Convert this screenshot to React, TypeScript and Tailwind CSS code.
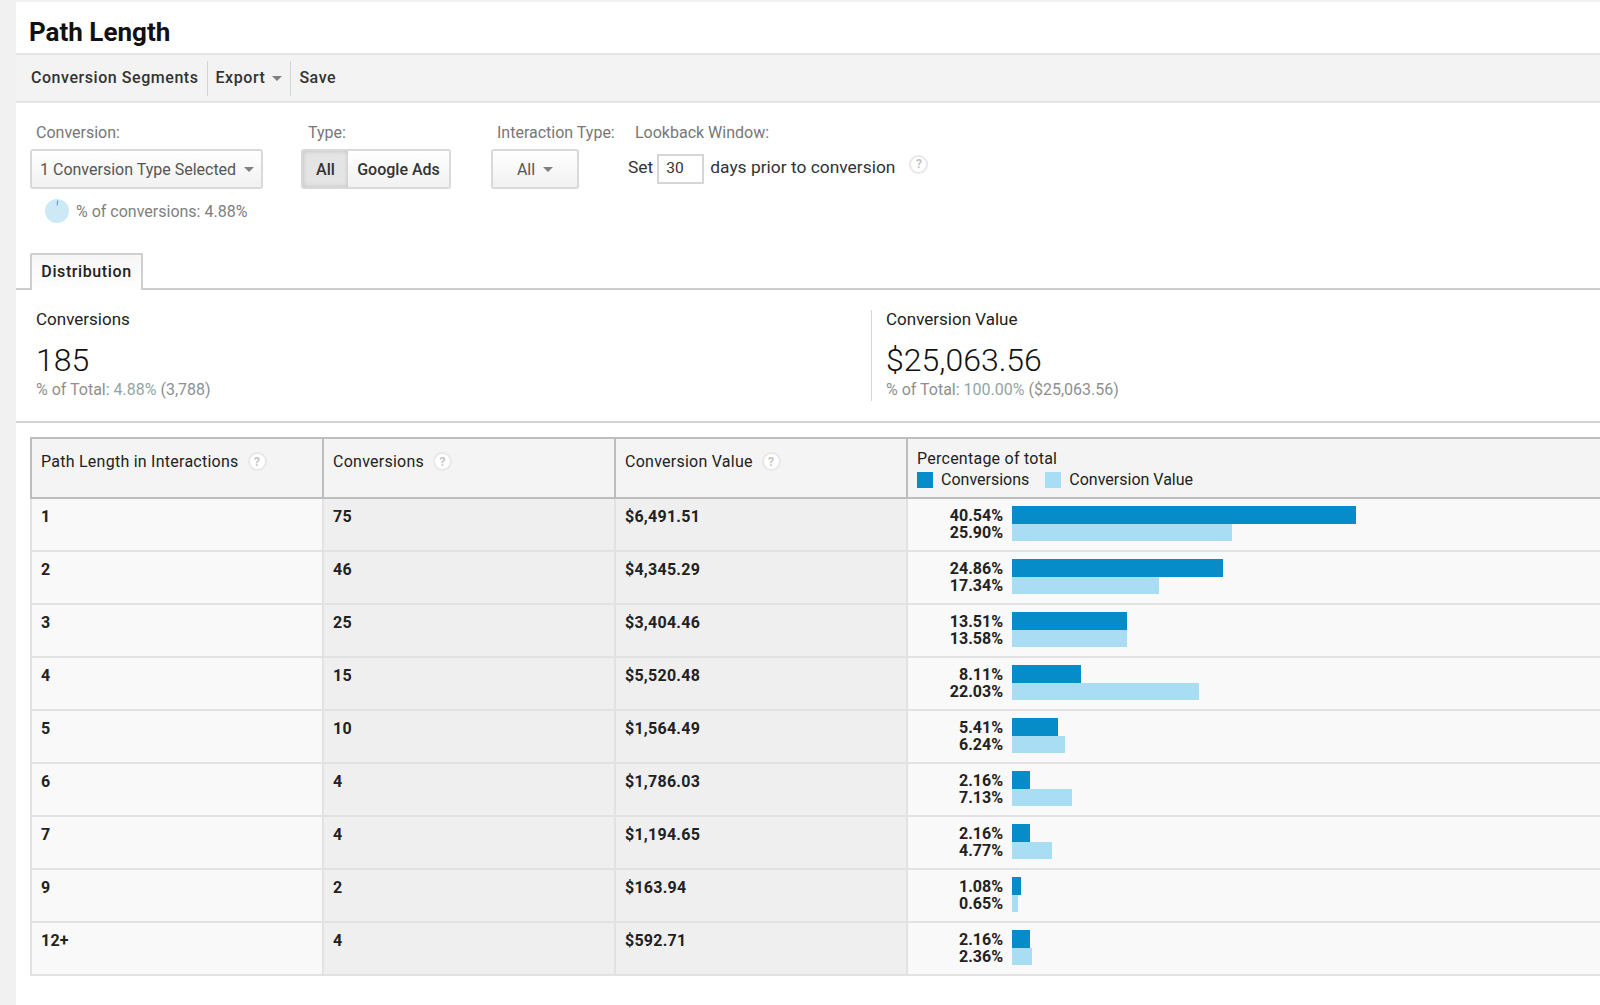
const rows = [
  { path: "1", conv: "75", value: "$6,491.51", a: 40.54, b: 25.9 },
  { path: "2", conv: "46", value: "$4,345.29", a: 24.86, b: 17.34 },
  { path: "3", conv: "25", value: "$3,404.46", a: 13.51, b: 13.58 },
  { path: "4", conv: "15", value: "$5,520.48", a: 8.11, b: 22.03 },
  { path: "5", conv: "10", value: "$1,564.49", a: 5.41, b: 6.24 },
  { path: "6", conv: "4", value: "$1,786.03", a: 2.16, b: 7.13 },
  { path: "7", conv: "4", value: "$1,194.65", a: 2.16, b: 4.77 },
  { path: "9", conv: "2", value: "$163.94", a: 1.08, b: 0.65 },
  { path: "12+", conv: "4", value: "$592.71", a: 2.16, b: 2.36 },
]

const PX_PER_PERCENT = 8.48

function Help({ className = "" }: { className?: string }) {
  return (
    <span className={`inline-flex h-[19px] w-[19px] items-center justify-center rounded-full border-2 border-[#e8e8e8] bg-white text-[12px] font-bold leading-none text-[#c4c4c4] ${className}`}>
      ?
    </span>
  )
}

function Caret({ className = "" }: { className?: string }) {
  return (
    <svg width="10" height="5" viewBox="0 0 10 5" className={className}>
      <path d="M0 0h10L5 5z" fill="#808080" />
    </svg>
  )
}

function Stat({ label, value, pct, total, className = "" }: { label: string; value: string; pct: string; total: string; className?: string }) {
  return (
    <div className={className}>
      <div className="text-[17px] leading-5 text-[#222]">{label}</div>
      <div className="mt-[11px] text-[32px] font-light leading-[40px] text-[#111]">{value}</div>
      <div className="mt-px text-[16px] leading-[18px] text-[#8f8f8f]">
        % of Total: <span className="text-[#93a5a3]">{pct}</span> {total}
      </div>
    </div>
  )
}

export default function App() {
  return (
    <div className="flex h-[1005px] overflow-hidden bg-[#f1f1f1] pt-[2px] font-['Roboto',sans-serif]">
      <div className="w-4 shrink-0" />
      <div className="min-w-0 flex-1 bg-white">
        <div className="flex h-[53px] items-center border-b-2 border-[#e4e4e4] pl-[13px] pt-[8px] text-[26px] font-bold leading-none text-[#111]">
          Path Length
        </div>

        <div className="flex h-[48px] items-center border-b-2 border-[#e4e4e4] bg-[#f3f3f3] pl-[15px] text-[16px] font-medium tracking-[0.55px] text-[#333]">
          <span className="pr-[8px]">Conversion Segments</span>
          <div className="flex h-[35px] items-center gap-[7px] border-l border-[#d4d4d4] pl-2 pr-[8px]">
            Export <Caret />
          </div>
          <div className="flex h-[35px] items-center border-l border-[#d4d4d4] pl-2">Save</div>
        </div>

        <div className="flex h-[150px] pl-[14px] pt-[21px] text-[16px] text-[#777]">
          <div className="w-[271px]">
            <div className="pl-[6px] leading-[17px]">Conversion:</div>
            <div className="mt-[8px] flex h-10 w-[233px] items-center justify-between rounded-[3px] border-2 border-[#d9d9d9] bg-gradient-to-b from-white to-[#f1f1f1] pl-2 pr-[7px] text-[#555]">
              <span className="pt-px">1 Conversion Type Selected</span> <Caret />
            </div>
            <div className="mt-[8px] flex items-center pl-[15px] text-[#808080]">
              <svg width="24" height="24" viewBox="0 0 24 24" className="mr-[7px]">
                <circle cx="12" cy="12" r="12" fill="#cde9f5" />
                <path d="M12.6 1.5 12.1 6.5" stroke="#3aa0d0" strokeWidth="1" />
              </svg>
              <span className="pt-[3px]">% of conversions: 4.88%</span>
            </div>
          </div>

          <div className="w-[190px]">
            <div className="pl-[7px] leading-[17px]">Type:</div>
            <div className="mt-[8px] flex h-10 w-[150px] overflow-hidden rounded-[3px] border-2 border-[#d9d9d9] font-medium text-[#333]">
              <div className="flex w-[45px] items-center justify-center bg-[#e4e4e4] pt-px shadow-[inset_0_0_4px_#bbb]">All</div>
              <div className="flex flex-1 items-center justify-center bg-gradient-to-b from-white to-[#f1f1f1] pt-px">Google Ads</div>
            </div>
          </div>

          <div className="w-[136px]">
            <div className="pl-[6px] leading-[17px]">Interaction Type:</div>
            <div className="mt-[8px] flex h-10 w-[88px] items-center justify-center gap-2 rounded-[3px] border-2 border-[#d9d9d9] bg-gradient-to-b from-white to-[#f1f1f1] text-[#555]">
              <span className="pt-px">All</span> <Caret />
            </div>
          </div>

          <div>
            <div className="pl-[8px] leading-[17px]">Lookback Window:</div>
            <div className="mt-[13px] flex items-center pl-px text-[17.4px] text-[#333]">
              <span className="pb-[4px]">Set</span>
              <div className="ml-1 flex h-[30px] w-[47px] items-center border-2 border-[#d6d6d6] pl-[7px] text-[15.5px]">30</div>
              <span className="ml-[6px] pb-[4px]">days prior to conversion</span>
              <Help className="relative -top-[5px] ml-[14px]" />
            </div>
          </div>
        </div>

        <div className="flex h-[37px] items-end border-b-2 border-[#cfcfcf] pl-[14px]">
          <div className="relative top-[2px] flex h-[37px] w-[113px] items-center justify-center rounded-t-[2px] border-2 border-b-0 border-[#cfcfcf] bg-gradient-to-b from-[#f6f6f6] to-white pb-px text-[16px] font-medium tracking-[0.6px] text-[#222]">
            Distribution
          </div>
        </div>

        <div className="flex h-[133px] items-start border-b-2 border-[#d2d2d2] pl-5 pt-[19px]">
          <Stat className="w-[835px] shrink-0" label="Conversions" value="185" pct="4.88%" total="(3,788)" />
          <div className="mt-px h-[91px] w-px bg-[#d8d8d8]" />
          <Stat className="flex-1 pl-[14px]" label="Conversion Value" value="$25,063.56" pct="100.00%" total="($25,063.56)" />
        </div>

        <div className="pl-[14px] pt-[14px] text-[#222]">
          <div className="grid h-[62px] grid-cols-[292px_292px_292px_1fr] border-y-2 border-l-2 border-[#bdbdbd] bg-[#f4f4f4] text-[16px] tracking-[0.25px]">
            <div className="flex items-start gap-[9px] border-r-2 border-[#bdbdbd] pl-[9px] pt-[13px]">
              <span className="pt-px leading-[18px]">Path Length in Interactions</span> <Help />
            </div>
            <div className="flex items-start gap-[9px] border-r-2 border-[#bdbdbd] pl-[9px] pt-[13px]">
              <span className="pt-px leading-[18px]">Conversions</span> <Help />
            </div>
            <div className="flex items-start gap-[9px] border-r-2 border-[#bdbdbd] pl-[9px] pt-[13px]">
              <span className="pt-px leading-[18px]">Conversion Value</span> <Help />
            </div>
            <div className="pl-[9px] pt-[10px]">
              <div className="leading-[19px]">Percentage of total</div>
              <div className="mt-[3px] flex items-center leading-[18px] tracking-normal">
                <span className="h-4 w-4 bg-[#068dc9]" />
                <span className="ml-2">Conversions</span>
                <span className="ml-4 h-4 w-4 bg-[#a9ddf3]" />
                <span className="ml-2">Conversion Value</span>
              </div>
            </div>
          </div>

          {rows.map((row) => (
            <div key={row.path} className="grid h-[53px] grid-cols-[292px_292px_292px_1fr] border-b-2 border-l-2 border-[#e2e2e2] bg-[#f9f9f9] text-[16px] font-bold tracking-[0.25px] text-[#222]">
              <div className="border-r-2 border-[#e2e2e2] pl-[9px] pt-[9px] leading-[18px]">{row.path}</div>
              <div className="border-r-2 border-[#e2e2e2] bg-[#efefef] pl-[9px] pt-[9px] leading-[18px]">{row.conv}</div>
              <div className="border-r-2 border-[#e2e2e2] bg-[#efefef] pl-[9px] pt-[9px] leading-[18px]">{row.value}</div>
              <div className="flex pt-[7px]">
                <div className="w-[104px] pr-[9px] pt-px text-right leading-[17px] tracking-normal">
                  <div>{row.a.toFixed(2)}%</div>
                  <div>{row.b.toFixed(2)}%</div>
                </div>
                <div>
                  <div className="h-[17.5px] bg-[#068dc9]" style={{ width: row.a * PX_PER_PERCENT }} />
                  <div className="h-[17.5px] bg-[#a9ddf3]" style={{ width: row.b * PX_PER_PERCENT }} />
                </div>
              </div>
            </div>
          ))}
        </div>
      </div>
    </div>
  )
}
